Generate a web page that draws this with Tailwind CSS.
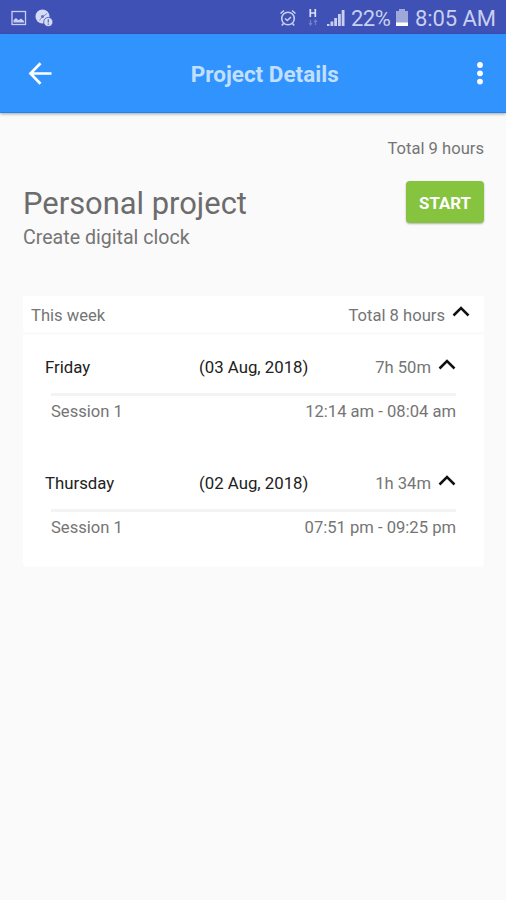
<!DOCTYPE html>
<html lang="en">
<head>
    <meta charset="UTF-8">
    <meta name="viewport" content="width=device-width, initial-scale=1.0">
    <title>Project Details</title>
    <script src="https://cdn.jsdelivr.net/npm/@tailwindcss/browser@4"></script>
</head>
<body class="bg-[#fafafa] min-h-screen font-['Roboto',sans-serif] text-[16.6px] text-[#757575] overflow-hidden">
    <!-- Status bar -->
    <div class="h-[34px] bg-[#3f51b5] flex items-center pl-[11px] pr-[11px] text-[#c9cff0]">
        <svg class="w-4 h-4 mt-0.5" viewBox="0 0 16 16" fill="none">
            <rect x="1" y="1.5" width="13.5" height="13" stroke="currentColor" stroke-width="1.3" />
            <path d="M2.500 12.500V10l2.500-2 2.500 2.200L10 8.500l3 2.500v1.500z" fill="currentColor" />
        </svg>
        <svg class="w-[18px] h-[18px] ml-2 mt-0.5" viewBox="0 0 18 18">
            <circle cx="7.500" cy="7.500" r="7" fill="#d5daf5" />
            <path d="M8 7.500L12 4.500M7 8L4.500 11.500" stroke="#7f8bd0" stroke-width="1" />
            <circle cx="7.500" cy="7.500" r="1.500" fill="#5c6bc0" />
            <circle cx="13.300" cy="13" r="4.600" fill="#d5daf5" stroke="#3f51b5" stroke-width=".8" />
            <path d="M13.300 10.300v3.300M13.300 14.500v1.300" stroke="#5c6bc0" stroke-width="1.300" />
        </svg>
        <div class="ml-auto flex items-center">
            <svg class="w-[18px] h-[18px] mt-0.5" viewBox="0 0 18 18" fill="none" stroke="currentColor" stroke-width="1.600">
                <circle cx="9" cy="9.500" r="6.300" />
                <path d="M6 9.500l2.300 2 3.700-3.500M1.500 4.500l3.500-3M16.500 4.500l-3.500-3M4.500 14.500l-1.700 2M13.500 14.500l1.700 2" />
            </svg>
            <svg class="w-[10px] h-[18px] ml-[11px]" viewBox="0 0 10 18" fill="none">
                <path d="M2.300 1v8M7.300 1v8M2.300 5h5" stroke="#dde1f8" stroke-width="1.700" />
                <path d="M2.500 12v5M1 15l1.500 2 1.500-2M7.500 17v-5M6 14l1.500-2 1.500 2" stroke="#7480c9" stroke-width="1.200" />
            </svg>
            <svg class="w-[18px] h-[18px] ml-[9px] mt-0.5" viewBox="0 0 18 18" fill="currentColor">
                <path d="M0 15h2.500v2H0zM3.500 12.500h2.800V17H3.500zM7.200 9H10v8H7.200zM11 5h2.800v12H11zM14.700 1h2.800v16h-2.800z" />
            </svg>
            <span class="ml-[6px] w-[40px] text-[22px] leading-[34px] mt-[4px] whitespace-nowrap tracking-[-0.5px]">22%</span>
            <svg class="w-3 h-[17px] ml-[5px]" viewBox="0 0 12 17">
                <path d="M3 0h6v2h3v15H0V2h3z" fill="#9fa8da" />
                <path d="M0 13.500h12V17H0z" fill="#fff" />
            </svg>
            <span class="ml-[7px] w-[80px] text-[22px] leading-[34px] mt-[4px] whitespace-nowrap tracking-[-0.1px]">8:05 AM</span>
        </div>
    </div>

    <!-- App bar -->
    <header class="h-[79px] bg-[#3194fe] border-b border-[#1c84ea] shadow-[0_1px_3px_rgba(0,0,0,0.35)] flex items-center pl-7 pr-[22.5px]">
        <svg class="w-6 h-6" viewBox="0 0 24 24" fill="none" stroke="#fff" stroke-width="2.700">
            <path d="M23.500 12.500H3M12.500 2.300L2.500 12.500l10 10.200" />
        </svg>
        <h1 class="flex-1 pl-0.5 pt-[3px] text-center text-[22.5px] font-bold text-[#c1dffe]">Project Details</h1>
        <svg class="w-2 h-6" viewBox="0 0 8 24" fill="#fff">
            <circle cx="4" cy="4" r="2.900" />
            <circle cx="4" cy="12.300" r="2.900" />
            <circle cx="4" cy="20.600" r="2.900" />
        </svg>
    </header>

    <main class="px-[23px] pt-[26px] pr-[22px]">
        <p class="text-right leading-5">Total 9 hours</p>

        <div class="flex justify-between items-start mt-[22px]">
            <div class="pt-px">
                <h2 class="text-[30.9px] leading-[44px] text-[#6c6c6c]">Personal project</h2>
                <p class="text-[19.6px] leading-6">Create digital clock</p>
            </div>
            <button class="w-[78px] h-[42px] pt-[3px] rounded-[4px] bg-[#86c440] shadow-[0_1px_2px_rgba(0,0,0,0.3)] text-white font-bold text-[16.8px]">START</button>
        </div>

        <section class="mt-[46px]">
            <div class="h-9 bg-white flex items-center pl-2 pr-[14px]">
                <span class="pt-[5px]">This week</span>
                <span class="ml-auto pt-[5px]">Total 8 hours</span>
                <svg class="w-[18px] h-3 ml-[7px] mb-[7px]" viewBox="0 0 18 12" fill="none" stroke="#111" stroke-width="2.500">
                    <path d="M1.500 10.500L9 3l7.500 7.500" />
                </svg>
            </div>
            <div class="mt-0.5 h-[233px] rounded-b-[4px] bg-white border-t border-[#fcfcfc] pl-[22px] pr-[28px] pt-[13px]">
                <div class="h-[116px]">
                    <div class="h-10 flex items-center">
                        <span class="w-[154px] text-[16.8px] text-[#212121]">Friday</span>
                        <span class="text-[16.8px] text-[#212121]">(03 Aug, 2018)</span>
                        <span class="ml-auto">7h 50m</span>
                        <svg class="w-[18px] h-3 ml-[7px] mb-[9px]" viewBox="0 0 18 12" fill="none" stroke="#111" stroke-width="2.500">
                            <path d="M1.500 10.500L9 3l7.500 7.500" />
                        </svg>
                    </div>
                    <div class="ml-1.5 mt-[5px] border-t-[3px] border-[#f3f3f3] pt-[4px] flex justify-between leading-6">
                        <span>Session 1</span>
                        <span>12:14 am - 08:04 am</span>
                    </div>
                </div>
                <div class="h-[116px]">
                    <div class="h-10 flex items-center">
                        <span class="w-[154px] text-[16.8px] text-[#212121]">Thursday</span>
                        <span class="text-[16.8px] text-[#212121]">(02 Aug, 2018)</span>
                        <span class="ml-auto">1h 34m</span>
                        <svg class="w-[18px] h-3 ml-[7px] mb-[9px]" viewBox="0 0 18 12" fill="none" stroke="#111" stroke-width="2.500">
                            <path d="M1.500 10.500L9 3l7.500 7.500" />
                        </svg>
                    </div>
                    <div class="ml-1.5 mt-[5px] border-t-[3px] border-[#f3f3f3] pt-[4px] flex justify-between leading-6">
                        <span>Session 1</span>
                        <span>07:51 pm - 09:25 pm</span>
                    </div>
                </div>
            </div>
        </section>
    </main>
</body>
</html>
